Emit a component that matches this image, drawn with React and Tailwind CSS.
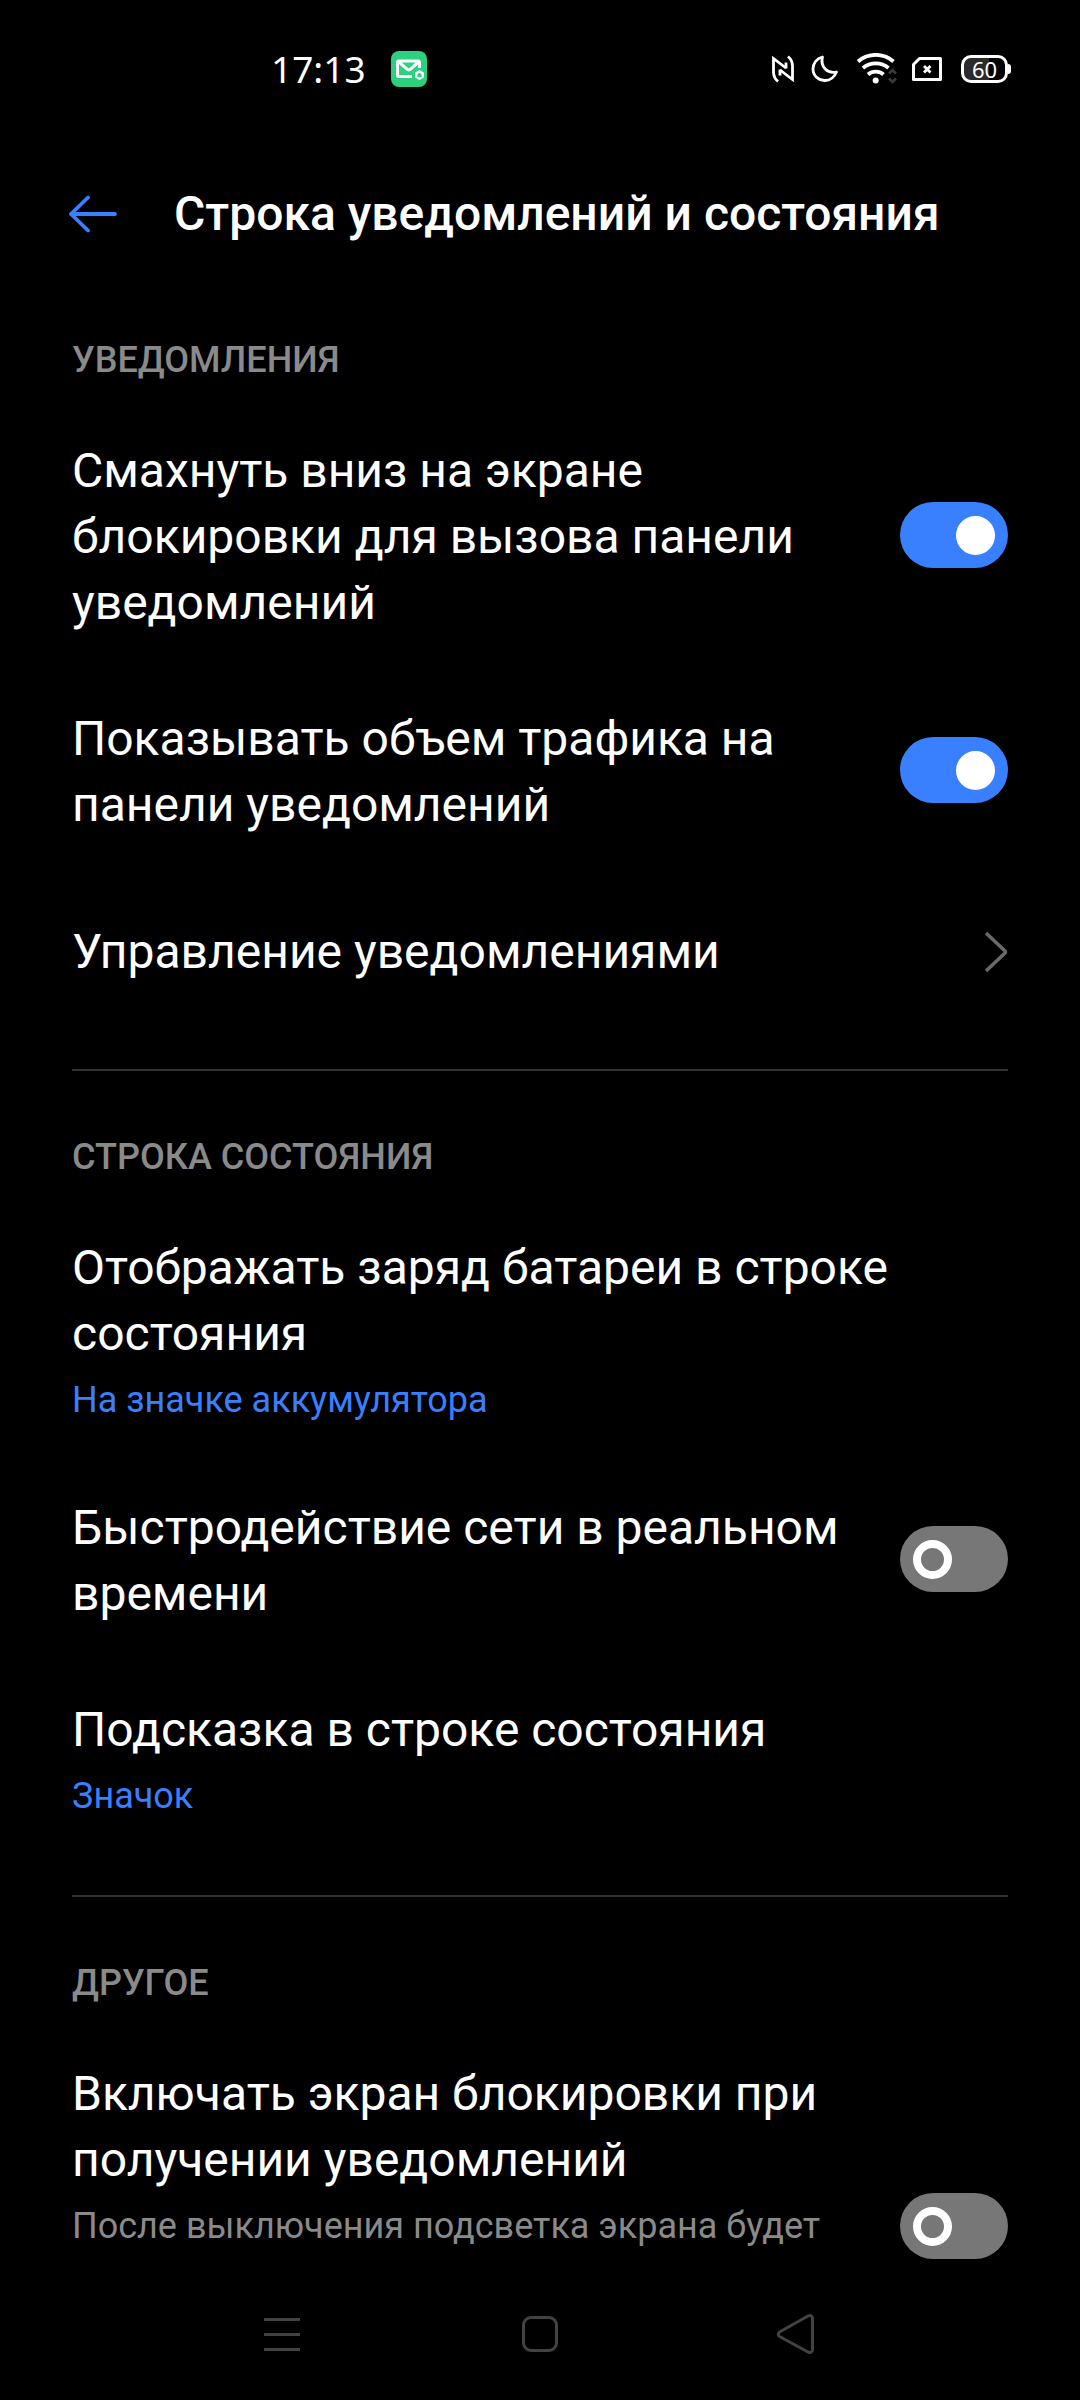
import { useState } from 'react';

const SECTIONS = [
  {
    title: 'УВЕДОМЛЕНИЯ',
    items: [
      {
        id: 'swipe-down',
        label: 'Смахнуть вниз на экране блокировки для вызова панели уведомлений',
        type: 'switch',
        on: true,
      },
      {
        id: 'traffic',
        label: 'Показывать объем трафика на панели уведомлений',
        type: 'switch',
        on: true,
      },
      { id: 'manage', label: 'Управление уведомлениями', type: 'link' },
    ],
  },
  {
    title: 'СТРОКА СОСТОЯНИЯ',
    items: [
      {
        id: 'battery',
        label: 'Отображать заряд батареи в строке состояния',
        value: 'На значке аккумулятора',
        type: 'choice',
      },
      {
        id: 'speed',
        label: 'Быстродействие сети в реальном времени',
        type: 'switch',
        on: false,
      },
      {
        id: 'hint',
        label: 'Подсказка в строке состояния',
        value: 'Значок',
        type: 'choice',
      },
    ],
  },
  {
    title: 'ДРУГОЕ',
    items: [
      {
        id: 'wake',
        label: 'Включать экран блокировки при получении уведомлений',
        note: 'После выключения подсветка экрана будет',
        type: 'switch',
        on: false,
        tall: true,
      },
    ],
  },
];

function StatusBar() {
  return (
    <div className="flex h-[138px] shrink-0 items-center justify-between pr-[69px] pl-[271px]">
      <div className="flex items-center gap-[25px]">
        <span className="font-['Noto_Sans',sans-serif] text-[37px] leading-[48px]">17:13</span>
        <svg width="36" height="36" viewBox="0 0 36 36" fill="none" aria-hidden="true">
          <rect width="36" height="36" rx="8" fill="#2bd17e" />
          <path
            d="M21 25.5H8a1.5 1.5 0 0 1-1.5-1.5V11.500A1.500 1.500 0 0 1 8 10H27a1.500 1.500 0 0 1 1.500 1.500V17"
            stroke="#fff"
            strokeWidth="3"
          />
          <path d="M8 11l8 7a2.500 2.500 0 0 0 3.500 0l8-7" stroke="#fff" strokeWidth="3" />
          <path d="M28.500 20.500l3.200 1.800v3.600l-3.200 1.800-3.200-1.800v-3.600z" stroke="#fff" strokeWidth="2.400" />
        </svg>
      </div>

      <div className="flex items-center">
        {/* NFC */}
        <svg className="mr-[17px]" width="22" height="28" viewBox="0 0 22 28" fill="none" stroke="#fff" strokeWidth="2.8" aria-hidden="true">
          <path d="M6 26.500C3 24 1.500 21 1.500 17V3.500L14 13" />
          <path d="M16 1.500c3 2.500 4.500 5.500 4.500 9.500v13.500L8 15" />
          <path d="M14 13.500V7.500M8 14.500V20.500" />
        </svg>
        {/* Do not disturb */}
        <svg className="mr-[18px]" width="28" height="28" viewBox="0 0 28 28" fill="none" aria-hidden="true">
          <path
            d="M11.500 2C5.500 3.500 2 8.500 2 14a11.500 11.500 0 0 0 12 11.500c5 0 9.500-3.500 11.500-8.500C16.500 19 9 12 11.500 2z"
            stroke="#fff"
            strokeWidth="2.800"
            strokeLinejoin="round"
          />
        </svg>
        {/* Wi-Fi */}
        <svg className="mr-[15px]" width="40" height="32" viewBox="0 0 40 32" fill="none" aria-hidden="true">
          <g stroke="#fff" strokeWidth="3.800">
            <path d="M1 8.500a27 27 0 0 1 35.500 0" />
            <path d="M6 15a20 20 0 0 1 25.500 0" />
            <path d="M11 21.500a12 12 0 0 1 15.500 0" />
          </g>
          <circle cx="18.700" cy="27.500" r="3" fill="#fff" />
          <path d="M32 20.500l3.500-3.500 3.500 3.500M32 25.500l3.500 3.500 3.500-3.500" stroke="#3a3a3a" strokeWidth="2.600" />
        </svg>
        {/* No SIM */}
        <svg className="mr-[19px]" width="30" height="24" viewBox="0 0 30 24" fill="none" stroke="#fff" aria-hidden="true">
          <path d="M7.500 1.500H28.500V22.500H1.500V7.500z" strokeWidth="3" strokeLinejoin="round" />
          <path d="M12 9l6.500 6.500M18.500 9L12 15.500" strokeWidth="2.800" />
        </svg>
        {/* Battery */}
        <div className="flex items-center">
          <div className="flex h-[28px] w-[47px] items-center justify-center rounded-[10px] border-3 border-white bg-linear-to-r from-[#2b2b2b] from-60% to-black to-60%">
            <span className="font-['Noto_Sans',sans-serif] text-[22px] leading-[22px]">60</span>
          </div>
          <div className="h-[10px] w-[3px] rounded-r-full bg-white" />
        </div>
      </div>
    </div>
  );
}

function Header() {
  return (
    <header className="flex h-[152px] shrink-0 items-center pr-[72px] pl-[69px]">
      <button type="button" aria-label="Назад" className="mr-[57px]">
        <svg width="48" height="38" viewBox="0 0 48 38" fill="none" stroke="#3880ff" strokeWidth="3.800" strokeLinecap="round" strokeLinejoin="round">
          <path d="M19 2.500L2 19l17 16.500M2 19H46" />
        </svg>
      </button>
      <h1 className="text-[48px] leading-[64px] font-medium">Строка уведомлений и состояния</h1>
    </header>
  );
}

function Row({ item }) {
  const [checked, setChecked] = useState(item.on);

  const text = (
    <span className="flex flex-col gap-2">
      <span className="text-[48px] leading-[66px]">{item.label}</span>
      {item.value && <span className="text-[36px] leading-[50px] text-[#3880ff]">{item.value}</span>}
      {item.note && <span className="text-[36px] leading-[50px] text-[#8a8a8a]">{item.note}</span>}
    </span>
  );

  if (item.type === 'switch') {
    return (
      <label className={`flex justify-between gap-12 py-[35px] ${item.tall ? 'min-h-[404px]' : ''}`}>
        {text}
        <input
          type="checkbox"
          role="switch"
          name={item.id}
          checked={checked}
          onChange={(e) => setChecked(e.target.checked)}
          className="mb-1 flex h-[66px] w-[108px] shrink-0 appearance-none items-center self-center rounded-full bg-[#777] before:ml-[13px] before:size-[39px] before:rounded-full before:border-8 before:border-white checked:bg-[#3880ff] checked:before:ml-[56px] checked:before:bg-white"
        />
      </label>
    );
  }

  if (item.type === 'link') {
    return (
      <a href="#manage" className="flex min-h-[157px] items-center justify-between">
        {text}
        <svg width="24" height="42" viewBox="0 0 24 42" fill="none" stroke="#6a6a6a" strokeWidth="3.500" aria-hidden="true">
          <path d="M2 2l19 18a1.500 1.500 0 0 1 0 2L2 40" />
        </svg>
      </a>
    );
  }

  return (
    <button type="button" className="flex py-[35px] text-left">
      {text}
    </button>
  );
}

function NavBar() {
  return (
    <nav className="grid h-[132px] shrink-0 grid-cols-3 items-center justify-items-center bg-black px-[153px]">
      <button type="button" aria-label="Недавние">
        <svg width="48" height="48" viewBox="0 0 48 48" fill="none" stroke="#424242" strokeWidth="3">
          <path d="M6 9.500H42M6 24.500H42M6 39.500H42" />
        </svg>
      </button>
      <button type="button" aria-label="Домой">
        <svg width="48" height="48" viewBox="0 0 48 48" fill="none" stroke="#424242" strokeWidth="3">
          <rect x="7.500" y="7.500" width="33" height="33" rx="7.500" />
        </svg>
      </button>
      <button type="button" aria-label="Назад">
        <svg width="48" height="48" viewBox="0 0 48 48" fill="none" stroke="#424242" strokeWidth="3">
          <path d="M5.500 22L34 6q4-1.500 4.500 2V40q-.5 3.500-4.500 2L5.500 26.500q-2.500-2.250 0-4.500z" strokeLinejoin="round" />
        </svg>
      </button>
    </nav>
  );
}

function App() {
  return (
    <div className="flex h-screen flex-col bg-black font-['Roboto',sans-serif] text-white">
      <StatusBar />
      <Header />
      <main className="min-h-0 flex-1 overflow-hidden px-[72px]">
        {SECTIONS.map((section, i) => (
          <section
            key={section.title}
            className={`flex flex-col ${i === 0 ? 'pt-[46px]' : 'mt-[39px] border-t-2 border-[#333] pt-[62px]'}`}
          >
            <h2 className="mb-[19px] text-[36px] leading-[48px] font-medium text-[#8a8a8a]">{section.title}</h2>
            {section.items.map((item) => (
              <Row key={item.id} item={item} />
            ))}
          </section>
        ))}
      </main>
      <NavBar />
    </div>
  );
}

export default App;
